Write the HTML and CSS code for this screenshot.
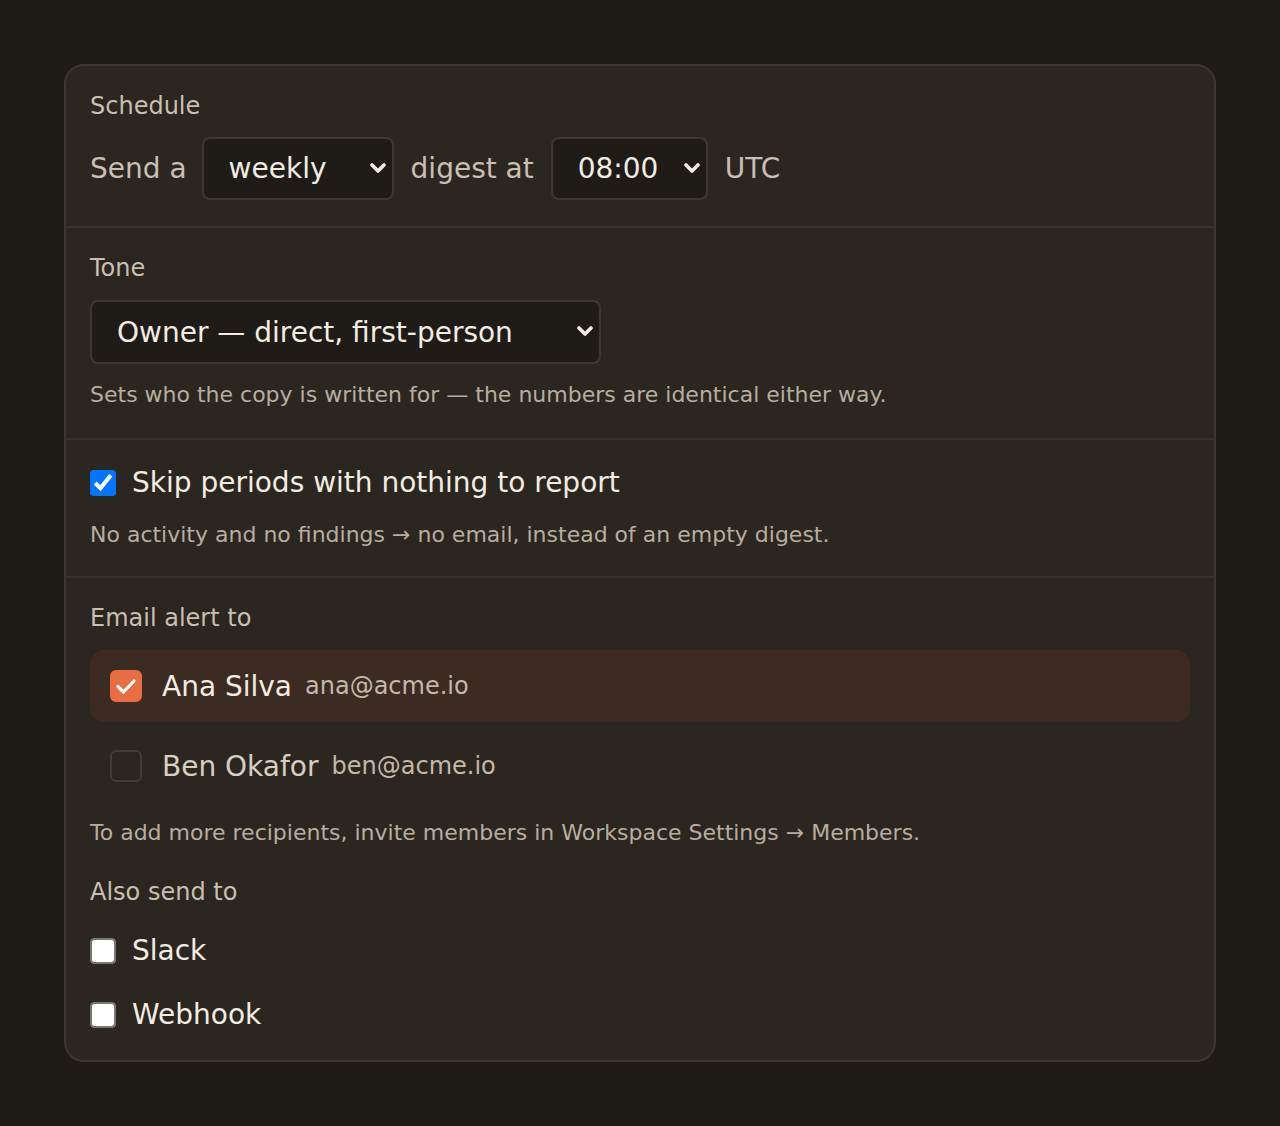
FILE: index.html
```html
<!DOCTYPE html>
<html lang="en">

<head>
  <meta charset="UTF-8" />
  <meta name="viewport" content="width=device-width, initial-scale=1" />
  <title>Digest settings</title>
  <link rel="stylesheet" href="styles.css">
</head>

<body>
  <main class="card">
    <section class="section section-schedule">
      <div class="label">Schedule</div>
      <div class="sentence">
        <span>Send a</span>
        <span class="select-wrap first">
          <select class="select select-freq">
            <option>weekly</option>
            <option>daily</option>
            <option>monthly</option>
          </select>
          <svg class="chevron" viewBox="0 0 16 11"><polyline points="2,2 8,8 14,2" /></svg>
        </span>
        <span>digest at</span>
        <span class="select-wrap">
          <select class="select select-time">
            <option>08:00</option>
            <option>09:00</option>
          </select>
          <svg class="chevron" viewBox="0 0 16 11"><polyline points="2,2 8,8 14,2" /></svg>
        </span>
        <span>UTC</span>
      </div>
    </section>

    <section class="section section-tone">
      <div class="label">Tone</div>
      <span class="select-wrap">
        <select class="select select-tone">
          <option>Owner — direct, first-person</option>
          <option>Team — neutral, third-person</option>
        </select>
        <svg class="chevron" viewBox="0 0 16 11"><polyline points="2,2 8,8 14,2" /></svg>
      </span>
      <p class="hint">Sets who the copy is written for — the numbers are identical either way.</p>
    </section>

    <section class="section section-skip">
      <label class="check-row">
        <input type="checkbox" checked>
        <span>Skip periods with nothing to report</span>
      </label>
      <p class="hint">No activity and no findings → no email, instead of an empty digest.</p>
    </section>

    <section class="section section-alerts">
      <div class="label">Email alert to</div>
      <div class="recipients">
        <label class="recipient selected">
          <span class="box"><svg viewBox="0 0 28 28"><polyline points="6,14.5 11.5,20 22,9" /></svg></span>
          <span class="name">Ana Silva</span>
          <span class="email">ana@acme.io</span>
        </label>
        <label class="recipient">
          <span class="box"></span>
          <span class="name">Ben Okafor</span>
          <span class="email">ben@acme.io</span>
        </label>
      </div>
      <p class="hint">To add more recipients, invite members in Workspace Settings → Members.</p>

      <div class="label also">Also send to</div>
      <div class="channels">
        <label class="check-row">
          <input type="checkbox">
          <span>Slack</span>
        </label>
        <label class="check-row">
          <input type="checkbox">
          <span>Webhook</span>
        </label>
      </div>
    </section>
  </main>
</body>

</html>
```

FILE: styles.css
```css
/* Base */
* {
  box-sizing: border-box;
}

body {
  font-family: 'DejaVu Sans', 'Liberation Sans', sans-serif;
  margin: 0;
  padding: 64px;
  background: #1f1c18;
  color: #f3ece2;
}

.card {
  background: #2b2620;
  border: 2px solid #3e372e;
  border-radius: 20px;
  overflow: hidden;
}

.section {
  padding: 22px 24px 26px;
}

.section + .section {
  border-top: 2px solid #38322a;
}

.section-tone {
  padding-bottom: 27px;
}

.section-skip {
  padding-bottom: 25px;
}

.section-alerts {
  padding-bottom: 24px;
}

.label {
  font-size: 24px;
  line-height: 36px;
  color: #c9bfb2;
}

.label.also {
  margin-top: 25px;
}

.hint {
  margin: 14px 0 0;
  font-size: 22px;
  line-height: 33px;
  color: #b8ad9f;
}

/* Sentence with selects */
.sentence {
  display: flex;
  align-items: center;
  gap: 17px;
  margin-top: 13px;
  font-size: 28px;
  color: #c9bfb2;
}

.sentence .select-wrap.first {
  margin-left: -2px;
}

.select-wrap {
  position: relative;
  display: inline-block;
}

.section > .select-wrap {
  margin-top: 14px;
}

.select {
  appearance: none;
  -webkit-appearance: none;
  display: block;
  height: 63px;
  padding: 0 40px 0 25px;
  font-family: inherit;
  font-size: 28px;
  color: #f3ece2;
  background: #1f1c18;
  border: 2px solid #3e372e;
  border-radius: 8px;
  outline: none;
}

.select-freq {
  width: 192px;
}

.select-time {
  width: 157px;
}

.select-tone {
  width: 511px;
  height: 64px;
}

.chevron {
  position: absolute;
  right: 8px;
  top: 26px;
  width: 16px;
  height: 11px;
  fill: none;
  stroke: #f3ece2;
  stroke-width: 3.6;
  stroke-linecap: round;
  stroke-linejoin: round;
  pointer-events: none;
}

/* Native checkbox rows */
.check-row {
  display: flex;
  align-items: center;
  gap: 16px;
  font-size: 28px;
  line-height: 42px;
  color: #f3ece2;
}

.check-row input {
  zoom: 2;
  width: 13px;
  height: 13px;
  margin: 0;
}

.channels {
  display: flex;
  flex-direction: column;
  gap: 22px;
  margin-top: 20px;
}

/* Recipients */
.recipients {
  display: flex;
  flex-direction: column;
  gap: 8px;
  margin-top: 14px;
}

.recipient {
  display: flex;
  align-items: center;
  height: 72px;
  padding: 0 20px;
  border-radius: 14px;
}

.recipient.selected {
  background: #3c2b22;
}

.recipient .box {
  width: 32px;
  height: 32px;
  margin-right: 20px;
  border: 2px solid #453d33;
  border-radius: 6px;
  display: flex;
  align-items: center;
  justify-content: center;
}

.recipient.selected .box {
  background: #e96d42;
  border-color: #e96d42;
}

.recipient .box svg {
  width: 28px;
  height: 28px;
  fill: none;
  stroke: #fff;
  stroke-width: 3.2;
  stroke-linecap: round;
  stroke-linejoin: round;
}

.recipient .name {
  font-size: 28px;
  color: #d8cec1;
  margin-right: 13px;
}

.recipient.selected .name {
  color: #f3ece2;
}

.recipient .email {
  font-size: 24px;
  color: #c4b8a9;
}
```
